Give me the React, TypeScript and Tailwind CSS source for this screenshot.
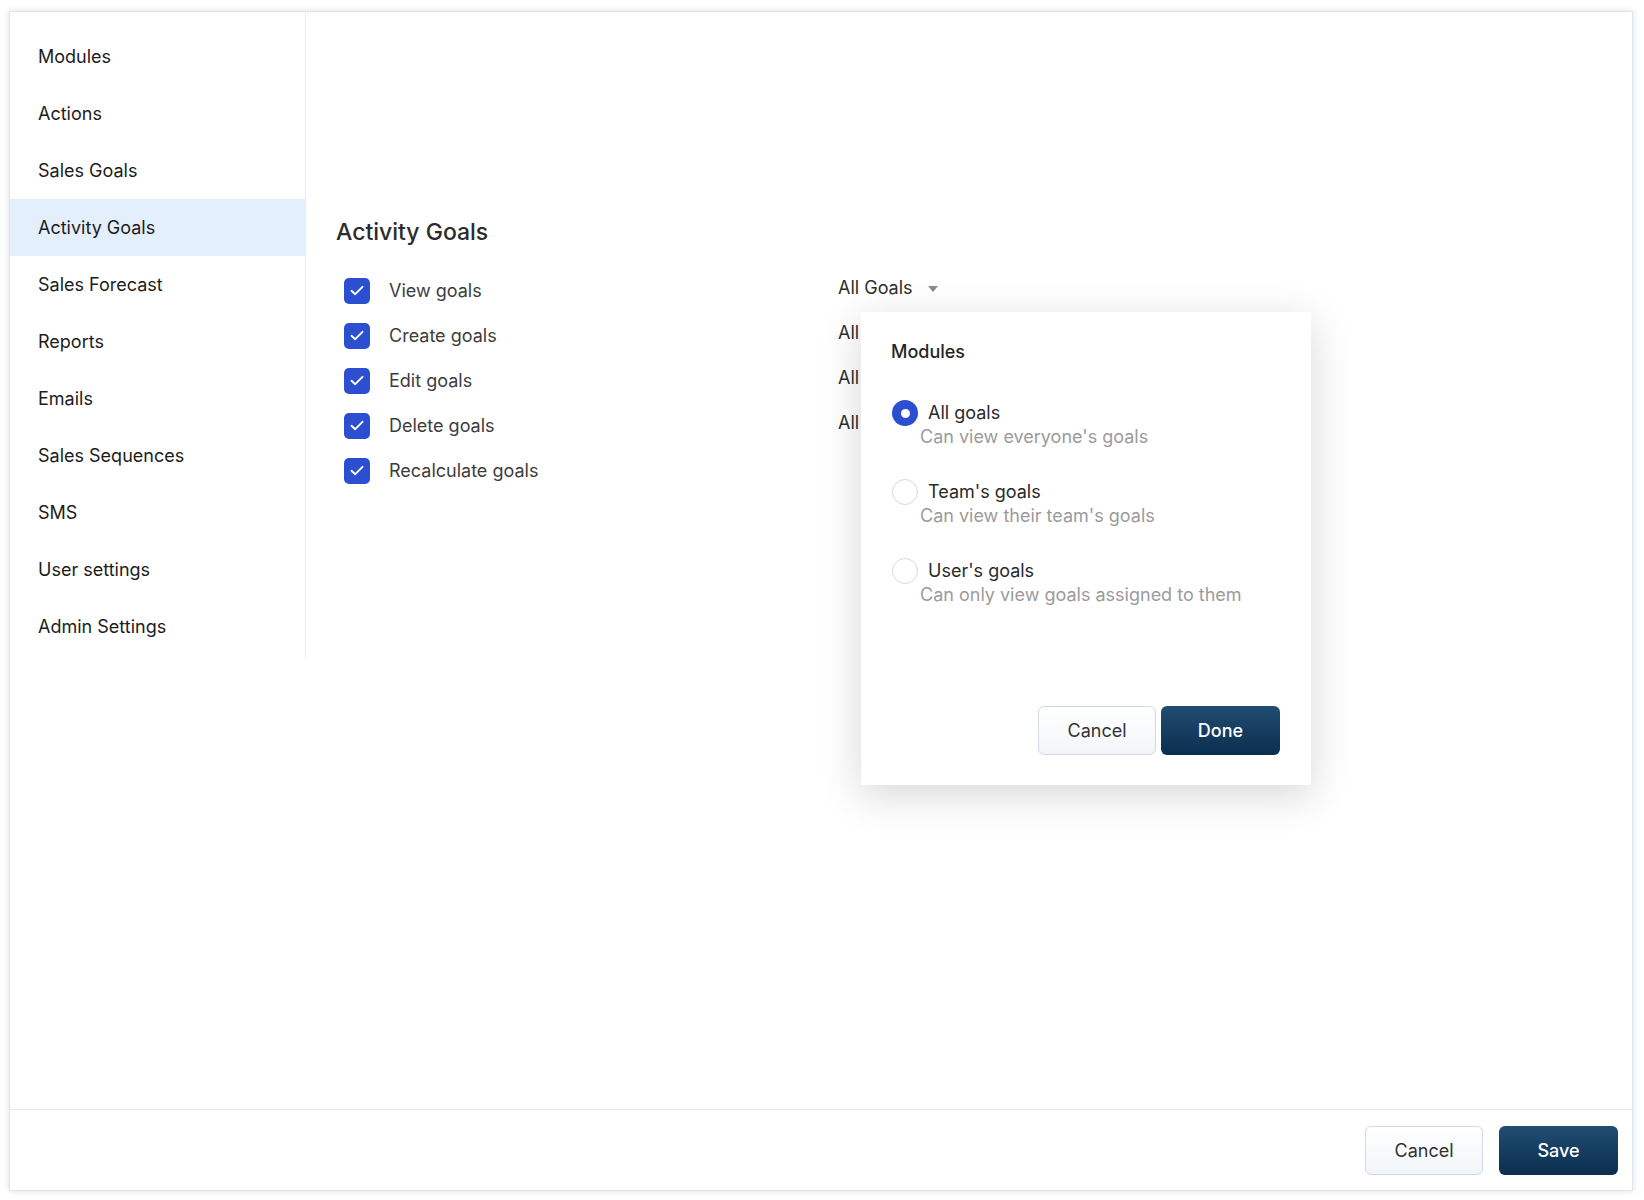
import React from "react";

const nav = [
  "Modules",
  "Actions",
  "Sales Goals",
  "Activity Goals",
  "Sales Forecast",
  "Reports",
  "Emails",
  "Sales Sequences",
  "SMS",
  "User settings",
  "Admin Settings",
];

const perms: { label: string; scope?: string; caret?: boolean }[] = [
  { label: "View goals", scope: "All Goals", caret: true },
  { label: "Create goals", scope: "All" },
  { label: "Edit goals", scope: "All" },
  { label: "Delete goals", scope: "All" },
  { label: "Recalculate goals" },
];

const options = [
  { label: "All goals", desc: "Can view everyone's goals", checked: true },
  { label: "Team's goals", desc: "Can view their team's goals", checked: false },
  { label: "User's goals", desc: "Can only view goals assigned to them", checked: false },
];

function Check() {
  return (
    <div className="flex h-[26px] w-[26px] shrink-0 items-center justify-center rounded-[5px] bg-[#2b4fd0]">
      <svg width="14" height="11" viewBox="0 0 14 11" fill="none">
        <path d="M1.5 5.8 L5.2 9.2 L12.5 1.8" stroke="white" strokeWidth="1.9" strokeLinecap="round" strokeLinejoin="round" />
      </svg>
    </div>
  );
}

function Radio({ checked }: { checked: boolean }) {
  return checked ? (
    <div className="ml-[1px] flex h-[26px] w-[26px] shrink-0 items-center justify-center rounded-full bg-[#2b4fd0]">
      <div className="h-[9px] w-[9px] rounded-full bg-white" />
    </div>
  ) : (
    <div className="ml-[1px] h-[26px] w-[26px] shrink-0 rounded-full border-[1.5px] border-[#d3d9e1] bg-white" />
  );
}

export default function App() {
  return (
    <div className="min-h-[1200px] w-[1644px] bg-white pl-[9px] pt-[11px] font-['Inter',sans-serif]">
      <div className="flex h-[1180px] w-[1624px] flex-col border border-[#dfe5ec] bg-white shadow-[0_0_6px_rgba(0,0,0,0.14)]">
        <div className="flex flex-1">
          <nav className="w-[296px] self-start border-r border-[#e8ebef] pb-[2px] pt-[16px]">
            {nav.map((n) => (
              <div
                key={n}
                className={`flex h-[57px] items-center pl-[28px] text-[18px] text-[#1c1c1c] ${
                  n === "Activity Goals" ? "bg-[#e4effd]" : ""
                }`}
              >
                {n}
              </div>
            ))}
          </nav>
          <div className="flex-1 pl-[30px] pt-[206px]">
            <h2 className="text-[23px] font-medium leading-[28px] text-[#2b2b2b]">Activity Goals</h2>
            <div className="mt-[22px] flex flex-col">
              {perms.map((p, i) => (
                <div key={p.label} className="relative flex h-[45px] items-center">
                  <div className="flex w-[502px] items-center gap-[19px] pl-[8px]">
                    <Check />
                    <span className="text-[18px] text-[#3d3d3d]">{p.label}</span>
                  </div>
                  {p.scope && (
                    <div className="flex items-center pb-[6px] text-[18px] text-[#2e2e2e]">
                      <span>{p.scope}</span>
                      {p.caret && (
                        <svg className="ml-[15px] mt-[3px]" width="10" height="6" viewBox="0 0 10 6">
                          <path d="M0 0 L10 0 L5 6 Z" fill="#8c8c8c" />
                        </svg>
                      )}
                    </div>
                  )}
                  {i === 0 && (
                    <div className="absolute left-[525px] top-[44px] z-10 flex h-[473px] w-[450px] flex-col bg-white pb-[30px] pl-[30px] pr-[31px] pt-[28px] shadow-[0_10px_40px_rgba(0,0,0,0.16)]">
                      <div className="text-[18px] font-medium leading-[24px] text-[#262626]">Modules</div>
                      <div className="mt-[37px] flex flex-col gap-[31px]">
                        {options.map((o) => (
                          <div key={o.label} className="flex flex-col">
                            <div className="flex h-[24px] items-center gap-[10px]">
                              <Radio checked={o.checked} />
                              <span className="text-[18px] leading-[24px] text-[#2a2a2a]">{o.label}</span>
                            </div>
                            <div className="pl-[29px] text-[18px] leading-[24px] text-[#9b9b9b]">{o.desc}</div>
                          </div>
                        ))}
                      </div>
                      <div className="mt-auto flex justify-end gap-[5px]">
                        <button className="h-[49px] w-[118px] rounded-[6px] border border-[#d0d9e4] bg-gradient-to-b from-white to-[#f2f5f8] text-[18px] text-[#333]">
                          Cancel
                        </button>
                        <button className="h-[49px] w-[119px] rounded-[6px] bg-gradient-to-b from-[#214d72] to-[#0b2e4e] text-[18px] font-medium text-white">
                          Done
                        </button>
                      </div>
                    </div>
                  )}
                </div>
              ))}
            </div>
          </div>
        </div>
        <div className="flex h-[81px] items-center justify-end gap-[16px] border-t border-[#e3e9f0] pr-[14px]">
          <button className="h-[49px] w-[118px] rounded-[6px] border border-[#d0d9e4] bg-gradient-to-b from-white to-[#f2f5f8] text-[18px] text-[#333]">
            Cancel
          </button>
          <button className="h-[49px] w-[119px] rounded-[6px] bg-gradient-to-b from-[#214d72] to-[#0b2e4e] text-[18px] font-medium text-white">
            Save
          </button>
        </div>
      </div>
    </div>
  );
}
